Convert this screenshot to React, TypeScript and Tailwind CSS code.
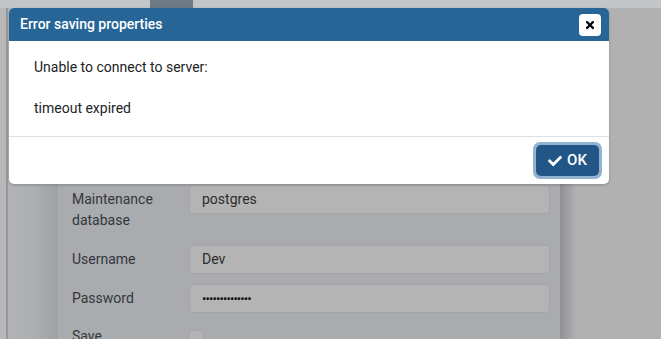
import React from 'react';
import { FaCheck, FaTimes } from 'react-icons/fa';

const FormRow: React.FC<{ label: React.ReactNode; children: React.ReactNode; className?: string; labelPad?: string }> = ({ label, children, className, labelPad }) => (
    <div className={`flex items-start ${className ?? ''}`}>
        <div className={`w-[117px] text-[14px] leading-[21px] text-[#34373b] ${labelPad ?? 'pt-[4px]'}`}>{label}</div>
        <div className="flex-1">{children}</div>
    </div>
);

const TextBox: React.FC<{ value: string; password?: boolean }> = ({ value, password }) => (
    <div className="h-[29px] rounded-[4px] border border-[#a3a5a8] bg-[#b4b4b4] pl-[12px] flex items-center text-[14px] text-[#2b2c2e]">
        {password ? <span className="text-[13px] tracking-[-0.9px] text-[#111]">{value}</span> : value}
    </div>
);

export default function App() {
    return (
        <div className="relative w-[661px] h-[339px] overflow-hidden bg-[#b1b1b1] font-['Roboto',sans-serif]">
            {/* page behind the modal overlay */}
            <div className="flex flex-col h-full">
                <div className="h-[8px] bg-[#c4c5c7] flex shrink-0">
                    <div className="ml-[150px] w-[43px] bg-[#6e7a86]" />
                </div>
                <div className="flex flex-1">
                    <div className="w-[6px] bg-[#b8b8b9]" />
                    <div className="w-[2px] bg-[#95989c]" />
                    <div className="w-[50px] bg-gradient-to-r from-[#b2b3b5] via-[#aeafb2] to-[#9fa1a5]" />
                    <div className="w-[502px] bg-[#a9abaf] pl-[14px] pr-[10px] pt-[177px] flex flex-col">
                        <FormRow label={<>Maintenance<br />database</>}>
                            <TextBox value="postgres" />
                        </FormRow>
                        <FormRow label="Username" className="mt-[14px]">
                            <TextBox value="Dev" />
                        </FormRow>
                        <FormRow label="Password" className="mt-[10px]">
                            <TextBox value="••••••••••••••" password />
                        </FormRow>
                        <FormRow label="Save" className="mt-[13px]" labelPad="pt-0">
                            <div className="mt-[4px] w-[15px] h-[15px] rounded-[3px] border border-[#a3a5a8] bg-[#b4b4b4]" />
                        </FormRow>
                    </div>
                    <div className="w-[16px] bg-gradient-to-r from-[#8e9094] to-[#b1b1b1]" />
                    <div className="flex-1 bg-[#b1b1b1]" />
                </div>
            </div>

            {/* modal dialog */}
            <div className="absolute left-[9px] top-[8px] w-[600px] h-[176px] bg-white rounded-[5px] overflow-hidden flex flex-col shadow-[0_1px_3px_rgba(0,0,0,0.2)]">
                <div className="h-[33px] bg-[#276597] flex items-center justify-between pl-[11px] pr-[8px] shrink-0">
                    <span className="text-white text-[14px] font-medium">Error saving properties</span>
                    <button className="w-[22px] h-[22px] rounded-[4px] bg-white flex items-center justify-center text-black">
                        <FaTimes className="w-[12px] h-[12px]" />
                    </button>
                </div>
                <div className="h-[95px] pl-[25px] pt-[16px] text-[14px] leading-[21px] text-[#222326] shrink-0">
                    <p className="mb-[20px]">Unable to connect to server:</p>
                    <p>timeout expired</p>
                </div>
                <div className="flex-1 border-t border-[#dde1e6] flex items-start justify-end pt-[5px] pr-[7px]">
                    <button className="rounded-[7px] border-[3px] border-[#93b2d0] bg-[#93b2d0]">
                        <div className="w-[63px] h-[31px] rounded-[5px] bg-[#215686] flex items-center justify-center gap-[5px] text-white text-[15px] font-medium">
                            <FaCheck className="w-[14px] h-[14px]" />
                            <span>OK</span>
                        </div>
                    </button>
                </div>
            </div>
        </div>
    );
}
